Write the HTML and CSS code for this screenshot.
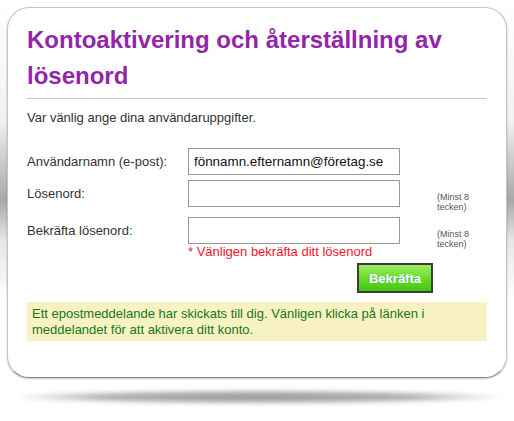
FILE: index.html
```html
<!DOCTYPE html>
<html lang="sv">
<head>
  <meta charset="UTF-8" />
  <meta name="viewport" content="width=device-width, initial-scale=1.0" />
  <title>Kontoaktivering</title>
  <link rel="stylesheet" href="styles.css">
</head>
<body>

<div class="sida">
  <div class="kort">
    <h1>Kontoaktivering och återställning av lösenord</h1>
    <p class="intro">Var vänlig ange dina användaruppgifter.</p>

    <form class="formular" onsubmit="return false;">
      <label for="epost">Användarnamn (e-post):</label>
      <input type="text" id="epost" value="fönnamn.efternamn@företag.se" />
      <span></span>

      <label for="losen">Lösenord:</label>
      <input type="password" id="losen" />
      <span class="tips">(Minst 8 tecken)</span>

      <label for="bekrafta">Bekräfta lösenord:</label>
      <div class="falt">
        <input type="password" id="bekrafta" />
        <div class="fel">* Vänligen bekräfta ditt lösenord</div>
      </div>
      <span class="tips">(Minst 8 tecken)</span>

      <div class="knapprad">
        <button type="submit">Bekräfta</button>
      </div>
    </form>

    <div class="meddelande">
      Ett epostmeddelande har skickats till dig. Vänligen klicka på länken i meddelandet för att aktivera ditt konto.
    </div>
  </div>
  <div class="skugga"></div>
</div>

</body>
</html>
```

FILE: styles.css
```css
* {
  box-sizing: border-box;
}

html, body {
  margin: 0;
  padding: 0;
  font-family: 'Liberation Sans', Arial, sans-serif;
  color: #333;
  background: #fff;
}

.sida {
  width: 514px;
  height: 421px;
  padding: 7px 7px 0 7px;
  background: linear-gradient(to bottom, #fff 0px, #f2f2f2 120px, #a8a8a8 200px, #e6e6e6 240px, #fff 300px);
}

.kort {
  position: relative;
  z-index: 1;
  width: 500px;
  height: 371px;
  background: #fff;
  border: 1px solid #c4c4c8;
  border-bottom-color: #888;
  border-radius: 22px;
  box-shadow: 0 1px 2px rgba(0, 0, 0, 0.25);
  padding: 14px 19px 0 19px;
}

h1 {
  margin: 0;
  font-size: 24px;
  line-height: 36px;
  color: #9326a8;
  font-weight: bold;
  padding-bottom: 4px;
  border-bottom: 1px solid #c8c8c8;
}

.intro {
  font-size: 13px;
  margin: 11px 0 0 0;
}

.formular {
  display: grid;
  grid-template-columns: 161px 212px 1fr;
  row-gap: 5px;
  margin-top: 23px;
  font-size: 13px;
}

.formular label {
  padding: 6px 0 0 0;
}

.formular input {
  width: 212px;
  height: 27px;
  border: 1px solid #999;
  font-family: 'Liberation Sans', Arial, sans-serif;
  font-size: 13.4px;
  color: #111;
  padding: 0 5px;
  margin: 0;
}

.falt {
  display: flex;
  flex-direction: column;
}

.fel {
  color: #f0142a;
  font-size: 13px;
  line-height: 14px;
  margin-top: 1px;
}

.tips {
  font-size: 9px;
  line-height: 10px;
  color: #555;
  padding: 12px 0 0 37px;
}

.knapprad {
  grid-column: 1 / 4;
  padding-left: 330px;
  margin-top: -1px;
}

button {
  width: 76px;
  height: 30px;
  border: 2px solid #3c3c3c;
  background: linear-gradient(to bottom, #9af063 0%, #6bdb2b 50%, #3fc80e 100%);
  color: #fff;
  font-family: 'Liberation Sans', Arial, sans-serif;
  font-size: 13px;
  font-weight: bold;
  text-shadow: 0 0 1px #4a8;
  cursor: pointer;
  padding: 0;
}

.meddelande {
  margin-top: 9px;
  background: #f7f1c4;
  color: #157a14;
  font-size: 13px;
  line-height: 16px;
  padding: 4px 20px 3px 5px;
}

.skugga {
  width: 490px;
  height: 14px;
  margin: 12px 0 0 6px;
  border-radius: 50%;
  background: radial-gradient(ellipse at center, #9a9a9a 0%, #b0b0b0 45%, rgba(255, 255, 255, 0) 72%);
  filter: blur(2px);
}
```
